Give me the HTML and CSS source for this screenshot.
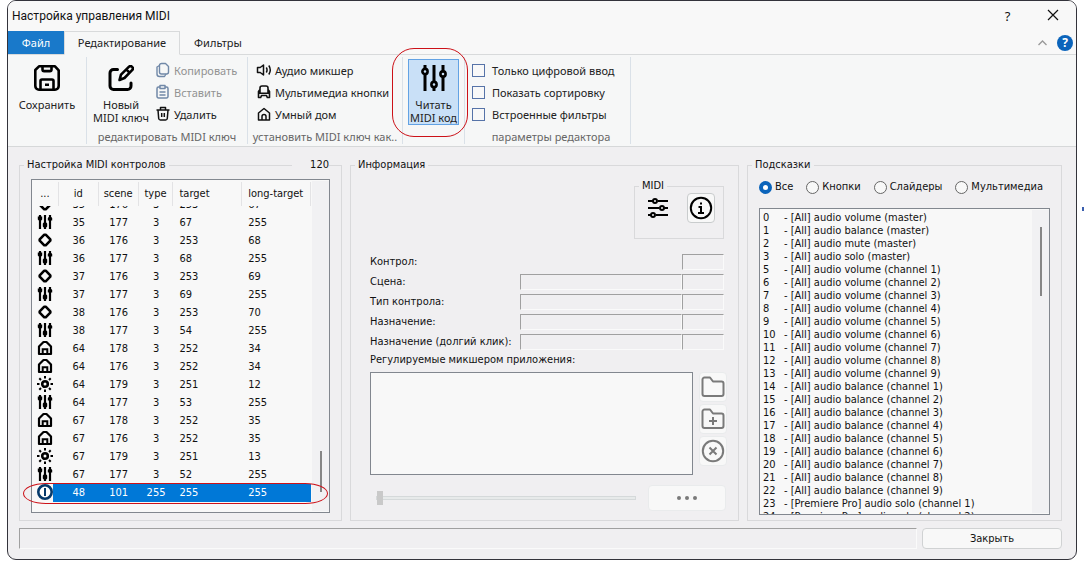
FILE: index.html
```html
<!DOCTYPE html>
<html lang="ru">
<head>
<meta charset="utf-8">
<title>Настройка управления MIDI</title>
<link rel="stylesheet" href="styles.css">
</head>
<body>
<svg class="defs" aria-hidden="true">
  <symbol id="faders" viewBox="0 0 26 26"><path d="M4 0v4M4 10v16M13 0v16M13 22v4M22 0v6M22 12v14" stroke="currentColor" stroke-width="3"/><g fill="none" stroke="currentColor" stroke-width="2.6"><circle cx="4" cy="6.500" r="2.600"/><circle cx="13" cy="19.500" r="2.600"/><circle cx="22" cy="9" r="2.600"/></g></symbol>
  <symbol id="mixer" viewBox="0 0 16 16"><path d="M3 1v14M8 1v14M13 1v14" stroke="currentColor" stroke-width="2.2"/><path d="M.8 2.500h4.400v3l-1 1H1.800l-1-1zM5.800 9.500l1-1h2.400l1 1v3l-1 1H6.800l-1-1zM10.800 4l1-1h2.400l1 1v2.500h-4.400z" fill="currentColor"/></symbol>
  <symbol id="knob" viewBox="0 0 16 16"><path d="M7.300 2.700h1.400l4.600 4.600v1.400l-4.600 4.600H7.300L2.700 8.700V7.300z" fill="none" stroke="currentColor" stroke-width="2.600" stroke-linejoin="round"/></symbol>
  <symbol id="home" viewBox="0 0 16 16"><path d="M2 14V6.500L6.500 2h3L14 6.500V14z" fill="none" stroke="currentColor" stroke-width="2.200" stroke-linejoin="round"/><path d="M5.700 14V9.300h4.600V14" fill="none" stroke="currentColor" stroke-width="2"/></symbol>
  <symbol id="sun" viewBox="0 0 16 16"><circle cx="8" cy="8" r="2.800" fill="none" stroke="currentColor" stroke-width="2.600"/><path d="M8 0v2.500M8 13.500V16M0 8h2.500M13.500 8H16M2.300 2.300l1.700 1.700M12 12l1.700 1.700M13.700 2.300L12 4M4 12l-1.700 1.700" stroke="currentColor" stroke-width="2"/></symbol>
  <symbol id="power" viewBox="0 0 16 16"><circle cx="8" cy="8" r="6.700" fill="#fff" stroke="currentColor" stroke-width="2.600"/><path d="M8 4v8" stroke="currentColor" stroke-width="2"/></symbol>
</svg>

<main class="window">
  <header class="titlebar">
    <h1>Настройка управления MIDI</h1>
    <button class="title-btn" type="button" aria-label="Справка">?</button>
    <button class="title-btn" type="button" aria-label="Закрыть окно"><svg width="12" height="12" viewBox="0 0 12 12"><path d="M1 1l10 10M11 1L1 11" stroke="#111" stroke-width="1.200"/></svg></button>
  </header>

  <nav class="tabs">
    <button class="tab tab-file" type="button">Файл</button>
    <button class="tab tab-active" type="button">Редактирование</button>
    <button class="tab tab-plain" type="button">Фильтры</button>
    <span class="tabs-fill"></span>
    <button class="bare" type="button" aria-label="Свернуть ленту"><svg width="9" height="6" viewBox="0 0 9 6"><path d="M.5 5l4-4 4 4" fill="none" stroke="#999" stroke-width="1.300"/></svg></button>
    <button class="help" type="button" aria-label="Помощь">?</button>
  </nav>

  <div class="ribbon">
    <section class="rgroup g-save">
      <button class="big" type="button">
        <svg width="26" height="26" viewBox="1 1 26 26" fill="none" stroke="#000" stroke-width="2.600" stroke-linejoin="round"><path d="M6 2.300h16l3.700 4V22a3.700 3.700 0 0 1-3.700 3.700H6A3.700 3.700 0 0 1 2.300 22V6z"/><path d="M9.500 2.500V5.500a1.600 1.600 0 0 0 1.600 1.600h5.800a1.600 1.600 0 0 0 1.600-1.600V2.500M7.500 25.500V17a1.500 1.500 0 0 1 1.500-1.500h10a1.500 1.500 0 0 1 1.500 1.500v8.500M12 20.800h4"/></svg>
        <span>Сохранить</span>
      </button>
    </section>
    <section class="rgroup g-edit">
      <div class="rbody">
        <button class="big" type="button">
          <svg width="26" height="26" viewBox="1 1 26 26" fill="none" stroke="#000" stroke-width="3" stroke-linejoin="round" stroke-linecap="round"><path d="M10.500 5.500H6.500A3.500 3.500 0 0 0 3 9v13A3.500 3.500 0 0 0 6.500 25.500H20.500A3.500 3.500 0 0 0 24 22v-3"/><path d="M12.500 16l1.500-5.300 7.800-7.800a2.300 2.300 0 0 1 3.300 3.300L17.500 14z M19.500 5.700l3 3" stroke-width="2.600"/></svg>
          <span>Новый<br>MIDI ключ</span>
        </button>
        <div class="stack">
          <button class="item" type="button" disabled><svg width="16" height="16" viewBox="0 0 16 16" fill="none" stroke="#7189a8" stroke-width="1.400" stroke-linejoin="round"><path d="M6.500 1.500h4l3 3v5.500a2 2 0 0 1-2 2h-5a2 2 0 0 1-2-2V3.500a2 2 0 0 1 2-2z"/><path d="M4.500 3.500L2 5V12a2.500 2.500 0 0 0 2.500 2.500h5L11 12"/></svg>Копировать</button>
          <button class="item" type="button" disabled><svg width="16" height="16" viewBox="0 0 16 16" fill="none" stroke="#7189a8" stroke-width="1.500" stroke-linejoin="round"><path d="M5 3H3.500A1.500 1.500 0 0 0 2 4.500v8A1.500 1.500 0 0 0 3.500 14h8a1.500 1.500 0 0 0 1.500-1.500v-8A1.500 1.500 0 0 0 11.500 3H10M5 1.500h5v3H5zM4.500 8h6M4.500 11h6"/></svg>Вставить</button>
          <button class="item" type="button"><svg width="16" height="16" viewBox="0 0 16 16" fill="none" stroke="#111" stroke-width="1.500" stroke-linejoin="round"><path d="M1.500 4h13M5.500 4V1.500h5V4M3 4l.7 8.500A1.700 1.700 0 0 0 5.400 14h5.200a1.700 1.700 0 0 0 1.700-1.500L13 4M6.700 7v4M9.300 7v4"/></svg>Удалить</button>
        </div>
      </div>
      <p class="caption">редактировать MIDI ключ</p>
    </section>
    <section class="rgroup g-set">
      <div class="stack">
        <button class="item" type="button"><svg width="16" height="16" viewBox="0 0 16 16" fill="none" stroke="#111" stroke-width="1.500" stroke-linejoin="round"><path d="M1.500 5.500h2.700L7.500 3v10l-3.300-2.500H1.500zM10.300 5.500q1.500 2.500 0 5M12.800 3.500q3 4.500 0 9"/></svg>Аудио микшер</button>
        <button class="item" type="button"><svg width="16" height="16" viewBox="0 0 16 16" fill="none" stroke="#111" stroke-width="1.600" stroke-linejoin="round"><path d="M4 9V4a2 2 0 0 1 2-2h4a2 2 0 0 1 2 2v5M4 5.500L2.500 7.500V13.500h2.200l.8-2h5l.8 2h2.200V7.500L12 5.500M2.500 9.200h11"/></svg>Мультимедиа кнопки</button>
        <button class="item" type="button"><svg width="16" height="16" viewBox="0 0 16 16" fill="none" stroke="#111" stroke-width="1.500" stroke-linejoin="round"><path d="M2.500 14V7L8 2.500 13.500 7v7zM6 14v-3.500a2 2 0 0 1 4 0V14"/></svg>Умный дом</button>
      </div>
      <p class="caption">установить MIDI ключ как..</p>
    </section>
    <section class="rgroup g-read">
      <button class="big big-on" type="button"><svg width="26" height="26"><use href="#faders"/></svg><span>Читать<br>MIDI код</span></button>
      <i class="mark-read"></i>
    </section>
    <section class="rgroup g-opts">
      <div class="stack">
        <label class="check"><input type="checkbox">Только цифровой ввод</label>
        <label class="check"><input type="checkbox">Показать сортировку</label>
        <label class="check"><input type="checkbox">Встроенные фильтры</label>
      </div>
      <p class="caption">параметры редактора</p>
    </section>
  </div>

  <div class="panels">
    <fieldset class="panel">
      <legend>Настройка MIDI контролов</legend>
      <output class="count">120</output>
      <div class="box controls">
        <table>
          <thead><tr><th>...</th><th>id</th><th>scene</th><th>type</th><th>target</th><th>long-target</th></tr></thead>
          <tbody>
            <tr><td><svg><use href="#knob"/></svg></td><td>35</td><td>176</td><td>3</td><td>253</td><td>67</td></tr>
            <tr><td><svg><use href="#mixer"/></svg></td><td>35</td><td>177</td><td>3</td><td>67</td><td>255</td></tr>
            <tr><td><svg><use href="#knob"/></svg></td><td>36</td><td>176</td><td>3</td><td>253</td><td>68</td></tr>
            <tr><td><svg><use href="#mixer"/></svg></td><td>36</td><td>177</td><td>3</td><td>68</td><td>255</td></tr>
            <tr><td><svg><use href="#knob"/></svg></td><td>37</td><td>176</td><td>3</td><td>253</td><td>69</td></tr>
            <tr><td><svg><use href="#mixer"/></svg></td><td>37</td><td>177</td><td>3</td><td>69</td><td>255</td></tr>
            <tr><td><svg><use href="#knob"/></svg></td><td>38</td><td>176</td><td>3</td><td>253</td><td>70</td></tr>
            <tr><td><svg><use href="#mixer"/></svg></td><td>38</td><td>177</td><td>3</td><td>54</td><td>255</td></tr>
            <tr><td><svg><use href="#home"/></svg></td><td>64</td><td>178</td><td>3</td><td>252</td><td>34</td></tr>
            <tr><td><svg><use href="#home"/></svg></td><td>64</td><td>176</td><td>3</td><td>252</td><td>34</td></tr>
            <tr><td><svg><use href="#sun"/></svg></td><td>64</td><td>179</td><td>3</td><td>251</td><td>12</td></tr>
            <tr><td><svg><use href="#mixer"/></svg></td><td>64</td><td>177</td><td>3</td><td>53</td><td>255</td></tr>
            <tr><td><svg><use href="#home"/></svg></td><td>67</td><td>178</td><td>3</td><td>252</td><td>35</td></tr>
            <tr><td><svg><use href="#home"/></svg></td><td>67</td><td>176</td><td>3</td><td>252</td><td>35</td></tr>
            <tr><td><svg><use href="#sun"/></svg></td><td>67</td><td>179</td><td>3</td><td>251</td><td>13</td></tr>
            <tr><td><svg><use href="#mixer"/></svg></td><td>67</td><td>177</td><td>3</td><td>52</td><td>255</td></tr>
            <tr class="selected"><td><svg><use href="#power"/></svg></td><td>48</td><td>101</td><td>255</td><td>255</td><td>255</td></tr>
          </tbody>
        </table>
        <div class="scroll scroll-end"><i></i></div>
        <i class="mark-row"></i>
      </div>
    </fieldset>

    <fieldset class="panel info">
      <legend>Информация</legend>
      <fieldset class="midi">
        <legend>MIDI</legend>
        <button class="bare" type="button" aria-label="Параметры MIDI"><svg width="24" height="24" viewBox="0 0 24 24" fill="none" stroke="#000" stroke-width="2"><path d="M2 5h5M12 5h10M2 12h11M18 12h4M2 19h3M10 19h12"/><circle cx="9" cy="5" r="2"/><circle cx="16" cy="12" r="2"/><circle cx="7" cy="19" r="2"/></svg></button>
        <button class="tool tool-info" type="button" aria-label="Сведения"><svg width="24" height="24" viewBox="0 0 24 24" fill="none" stroke="#000" stroke-width="2"><circle cx="12" cy="12" r="10.200"/><path d="M9.500 11H12v6M9 17h6M11 7.500h2"/></svg></button>
      </fieldset>
      <div class="fields">
        <label for="f1">Контрол:</label><input class="f-short" id="f1" readonly>
        <label for="f2">Сцена:</label><input id="f2" readonly><input aria-label="Код сцены" readonly>
        <label for="f3">Тип контрола:</label><input id="f3" readonly><input aria-label="Код типа" readonly>
        <label for="f4">Назначение:</label><input id="f4" readonly><input aria-label="Код назначения" readonly>
        <label for="f5">Назначение (долгий клик):</label><input id="f5" readonly><input aria-label="Код долгого клика" readonly>
      </div>
      <label class="apps-label" for="apps">Регулируемые микшером приложения:</label>
      <div class="apps">
        <textarea class="box" id="apps"></textarea>
        <div class="tools">
          <button class="tool" type="button" aria-label="Открыть"><svg width="24" height="24" viewBox="0 0 24 24"><path d="M3.500 2.500h5.500L12 6.500h8.500a2 2 0 0 1 2 2v10.500a2 2 0 0 1-2 2h-17a2 2 0 0 1-2-2V4.500a2 2 0 0 1 2-2z"/></svg></button>
          <button class="tool" type="button" aria-label="Добавить"><svg width="24" height="24" viewBox="0 0 24 24"><path d="M3.500 2.500h5.500L12 6.500h8.500a2 2 0 0 1 2 2v10.500a2 2 0 0 1-2 2h-17a2 2 0 0 1-2-2V4.500a2 2 0 0 1 2-2zM12 10v8M8 14h8"/></svg></button>
          <button class="tool" type="button" aria-label="Убрать"><svg width="24" height="24" viewBox="0 0 24 24"><circle cx="12" cy="12" r="10.200"/><path d="M8.500 8.500l7 7M15.500 8.500l-7 7"/></svg></button>
        </div>
      </div>
      <div class="level">
        <input type="range" min="0" max="100" value="0" aria-label="Уровень" disabled>
        <button class="tool more" type="button" aria-label="Ещё"><svg width="24" height="6" viewBox="0 0 24 6"><g fill="#7a7a7a" stroke="none"><circle cx="4" cy="3" r="2"/><circle cx="12" cy="3" r="2"/><circle cx="20" cy="3" r="2"/></g></svg></button>
      </div>
    </fieldset>

    <fieldset class="panel tips">
      <legend>Подсказки</legend>
      <div class="radios">
        <label><input type="radio" name="hint" checked>Все</label>
        <label><input type="radio" name="hint">Кнопки</label>
        <label><input type="radio" name="hint">Слайдеры</label>
        <label><input type="radio" name="hint">Мультимедиа</label>
      </div>
      <div class="box hints">
        <ul>
          <li><b>0</b>- [All] audio volume (master)</li>
          <li><b>1</b>- [All] audio balance (master)</li>
          <li><b>2</b>- [All] audio mute (master)</li>
          <li><b>3</b>- [All] audio solo (master)</li>
          <li><b>5</b>- [All] audio volume (channel 1)</li>
          <li><b>6</b>- [All] audio volume (channel 2)</li>
          <li><b>7</b>- [All] audio volume (channel 3)</li>
          <li><b>8</b>- [All] audio volume (channel 4)</li>
          <li><b>9</b>- [All] audio volume (channel 5)</li>
          <li><b>10</b>- [All] audio volume (channel 6)</li>
          <li><b>11</b>- [All] audio volume (channel 7)</li>
          <li><b>12</b>- [All] audio volume (channel 8)</li>
          <li><b>13</b>- [All] audio volume (channel 9)</li>
          <li><b>14</b>- [All] audio balance (channel 1)</li>
          <li><b>15</b>- [All] audio balance (channel 2)</li>
          <li><b>16</b>- [All] audio balance (channel 3)</li>
          <li><b>17</b>- [All] audio balance (channel 4)</li>
          <li><b>18</b>- [All] audio balance (channel 5)</li>
          <li><b>19</b>- [All] audio balance (channel 6)</li>
          <li><b>20</b>- [All] audio balance (channel 7)</li>
          <li><b>21</b>- [All] audio balance (channel 8)</li>
          <li><b>22</b>- [All] audio balance (channel 9)</li>
          <li><b>23</b>- [Premiere Pro] audio solo (channel 1)</li>
          <li><b>24</b>- [Premiere Pro] audio solo (channel 2)</li>
        </ul>
        <div class="scroll scroll-start"><i></i></div>
      </div>
    </fieldset>
  </div>

  <footer class="footer">
    <div class="status"></div>
    <button class="close" type="button">Закрыть</button>
  </footer>
</main>
<i class="behind"></i>
</body>
</html>
```

FILE: styles.css
```css
* { box-sizing: border-box; }

body {
  margin: 0;
  height: 100vh;
  padding: 0 7px 7px;
  background: #fff;
  color: #111;
  font: 11px/14px "DejaVu Sans Condensed", "Noto Sans", sans-serif;
}

button, input, textarea { font: inherit; color: inherit; margin: 0; padding: 0; }
button { border: 0; background: none; }
h1, p, ul { margin: 0; padding: 0; font-weight: 400; }
.defs { position: absolute; width: 0; height: 0; }

.window {
  height: 100%;
  display: flex;
  flex-direction: column;
  border: 1px solid #33333b;
  border-radius: 9px;
  background: #f0eff1;
  overflow: hidden;
}
.behind { position: absolute; top: 207px; right: 0; width: 2px; height: 4px; background: #3a5fae; }

.titlebar {
  display: flex;
  align-items: center;
  height: 30px;
  padding: 0 1px 0 4px;
  background: #f8f8f8;
}
.titlebar h1 { flex: 1; font: 12px/16px Roboto, sans-serif; }
.title-btn { width: 45px; height: 28px; font: 13px/16px "Noto Sans", sans-serif; }

.tabs {
  display: flex;
  align-items: stretch;
  height: 24px;
  background: #f8f8f8;
  box-shadow: inset 0 -1px #d8dadb;
  font: 11px/16px "Noto Sans", sans-serif;
  color: #222;
}
.tab { border-bottom: 1px solid #d8dadb; }
.tab-file { width: 56px; background: #1979ca; color: #fff; }
.tab-active { width: 116px; border: 1px solid #d8dadb; border-bottom-color: #f6f7f7; background: #f6f7f7; }
.tab-plain { width: 76px; }
.tabs-fill { flex: 1; }
.tabs .bare, .tabs .help { align-self: center; }
.bare { display: flex; align-items: center; justify-content: center; }
.help {
  width: 16px;
  height: 16px;
  margin: 0 3px 0 10px;
  border-radius: 50%;
  background: #0b64bb;
  color: #fff;
  font: 700 12px/16px "Noto Sans", sans-serif;
}

.ribbon {
  display: flex;
  height: 92px;
  padding: 2px 0;
  border-bottom: 1px solid #d6d8d9;
  background: #f6f7f7;
  font: 11px/13px "Noto Sans", sans-serif;
  color: #222;
}
.rgroup {
  position: relative;
  display: flex;
  flex-direction: column;
  justify-content: space-between;
  border-right: 1px solid #dae1e8;
}
.g-save { width: 79px; }
.g-edit { width: 161px; }
.g-set { width: 155px; padding-left: 8px; }
.g-read { width: 62px; padding: 2px 5px; }
.g-opts { width: 166px; padding-left: 7px; }
.rbody { display: flex; }
.big {
  display: flex;
  flex-direction: column;
  align-items: center;
  gap: 7px;
  padding-top: 8px;
  white-space: nowrap;
}
.g-edit .big { width: 68px; }
.big-on { height: 66px; padding-top: 5px; border: 1px solid #62a2e4; background: #c9e0f7; }
.big-on svg { color: #000; }
.stack { display: flex; flex-direction: column; padding-top: 2px; }
.item, .check { display: flex; align-items: center; height: 22px; gap: 3px; white-space: nowrap; }
.item:disabled { color: #929292; }
.caption { text-align: center; line-height: 14px; color: #666; white-space: nowrap; }
.g-set .caption { margin-left: -8px; }
.check { gap: 7px; }
.check input {
  appearance: none;
  width: 13px;
  height: 13px;
  border: 1px solid #5673a8;
  background: #f8f8f8;
}
.mark-read, .mark-row { position: absolute; border: 1px solid #cc1118; pointer-events: none; }
.mark-read { inset: -9px -4px auto -11px; height: 89px; border-radius: 22px; z-index: 2; }

.panels {
  flex: 1;
  min-height: 0;
  display: grid;
  grid-template-columns: 323fr 389fr 315fr;
  gap: 8px;
  padding: 11px 14px 7px 11px;
}
fieldset { min-width: 0; margin: 0; padding: 0; border: 1px solid #d9d9db; }
legend { margin-left: -7px; padding: 0 3px; line-height: 14px; }
.panel {
  position: relative;
  display: flex;
  flex-direction: column;
  min-height: 0;
  padding: 7px 11px;
}
.count { position: absolute; top: -14px; right: 12px; padding-left: 18px; background: #f0eff1; }
.box { position: relative; border: 1px solid #82878f; background: #f8f8f8; }

.controls { flex: 1; min-height: 0; }
table { display: flex; flex-direction: column; height: 100%; }
thead, tbody { display: block; }
tr { display: grid; grid-template-columns: 27fr 40fr 40fr 35fr 69fr 69fr; margin-right: 18px; }
th, td { padding: 0; font-weight: 400; text-align: center; }
th { margin-top: 2px; border-right: 1px solid #e3e3e5; line-height: 24px; }
th:nth-child(n+5), td:nth-child(n+5) { padding-left: 6px; text-align: left; }
tbody {
  flex: 1;
  min-height: 0;
  display: flex;
  flex-direction: column;
  justify-content: flex-end;
  overflow: hidden;
  padding-bottom: 10px;
}
tbody tr { flex: none; height: 18px; line-height: 18px; }
td svg { display: block; width: 16px; height: 16px; margin-left: 5px; color: #000; }
.selected td { background: #0078d7; color: #fff; }
.selected td:first-child { background: linear-gradient(90deg, transparent 21px, #0078d7 21px); }
.selected svg { color: #063a6b; }
.scroll { position: absolute; inset: 1px 0 1px auto; width: 17px; background: #f1f1f3; display: flex; justify-content: center; }
.scroll i { width: 2px; background: #868686; }
.scroll-end { align-items: flex-end; padding-bottom: 19px; }
.scroll-end i { height: 41px; }
.scroll-start { padding-top: 17px; }
.scroll-start i { height: 69px; }
.mark-row { left: -9px; right: 1px; bottom: 8px; height: 21px; border-radius: 24px / 11px; }

.info { padding: 7px 14px 9px 19px; }
.info > legend { margin-left: -15px; }
.midi { display: flex; align-items: center; justify-content: space-between; align-self: flex-end; width: 90px; height: 60px; padding: 0 8px 5px 11px; }
.tool {
  display: flex;
  align-items: center;
  justify-content: center;
  width: 28px;
  height: 30px;
  border: 1px solid #e9ebec;
  border-radius: 4px;
  background: #f8f8f8;
}
.tool-info { border-color: #c9cccd; }
.tools svg { fill: none; stroke: #7a7a7a; stroke-width: 2; stroke-linejoin: round; }
.fields {
  display: grid;
  grid-template-columns: 150px 1fr 42px;
  grid-auto-rows: 16px;
  row-gap: 4px;
  padding-top: 15px;
}
.fields label { line-height: 16px; white-space: nowrap; }
.fields input {
  min-width: 0;
  border: 1px solid;
  border-color: #a0a0a0 #fafafa #fafafa #a0a0a0;
  background: transparent;
}
.fields .f-short { grid-column: 3; }
.apps-label { padding: 3px 0 5px; }
.apps { display: flex; gap: 6px; flex: 1; min-height: 0; margin-right: -3px; }
.apps textarea { flex: 1; min-width: 0; resize: none; }
.tools { display: flex; flex-direction: column; gap: 2px; }
.level { display: flex; align-items: center; gap: 12px; margin: 10px -2px 0 6px; }
.level input { appearance: none; flex: 1; min-width: 0; height: 14px; background: none; }
.level input::-webkit-slider-runnable-track { height: 4px; border: 1px solid #d5d9da; background: #e7eaea; }
.level input::-webkit-slider-thumb { appearance: none; width: 6px; height: 14px; margin-top: -6px; background: #c9c9c9; }
.more { width: 78px; height: 26px; }

.radios { display: flex; justify-content: space-between; padding: 1px 7px 14px 0; }
.radios label { display: flex; align-items: center; gap: 3px; white-space: nowrap; }
.radios input { appearance: none; width: 13px; height: 13px; border: 1px solid #666; border-radius: 50%; background: #f8f8f8; }
.radios input:checked { border: 4px solid #0b64bb; background: #fff; }
.hints { flex: 1; min-height: 0; overflow: hidden; padding: 2px 3px; }
.tips { padding-bottom: 5px; }
.hints ul { list-style: none; }
.hints li { display: flex; height: 13px; line-height: 13px; white-space: nowrap; }
.hints b { width: 21px; font-weight: 400; }

.footer { display: flex; gap: 5px; padding: 0 14px 10px 11px; }
.status { flex: 1; border: 1px solid; border-color: #a0a0a0 #fafafa #fafafa #a0a0a0; }
.close { width: 140px; height: 21px; border: 1px solid #d0d2d3; border-radius: 4px; background: #f8f8f8; }
```
